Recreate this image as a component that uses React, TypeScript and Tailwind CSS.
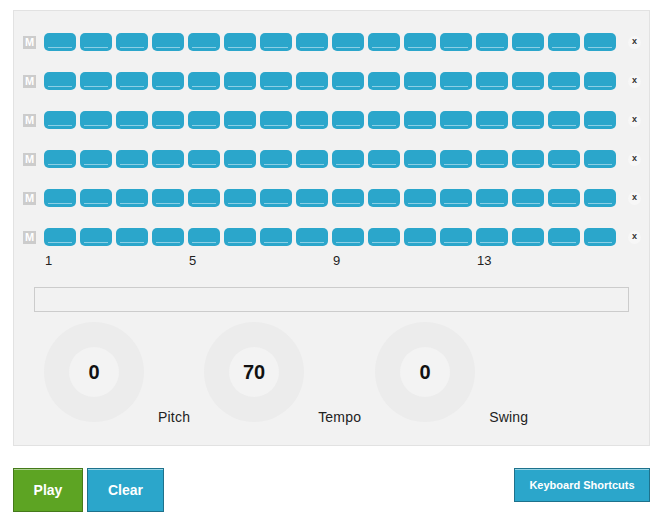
import React from 'react'

const rows = [0, 1, 2, 3, 4, 5]
const steps = Array.from({ length: 16 }, (_, i) => i)

const knobs = [
  { value: '0', label: 'Pitch' },
  { value: '70', label: 'Tempo' },
  { value: '0', label: 'Swing' },
]

function Step() {
  return (
    <button className="relative w-[32px] h-[18px] rounded-[5px] bg-[#2ba6cb] p-0">
      <span className="absolute left-[4px] right-[4px] bottom-[3px] h-px bg-[#8ccfe5]"></span>
    </button>
  )
}

export default function App() {
  return (
    <div
      className="w-[666px] h-[528px] bg-white pt-[10px] pl-[13px]"
      style={{ fontFamily: '"Liberation Sans", Arial, sans-serif' }}
    >
      <div className="w-[637px] h-[436px] border border-[#e2e2e2] bg-[#f2f2f2] pt-[22px] pl-[9px]">
        {/* sequencer rows */}
        <div className="flex flex-col gap-[21px]">
          {rows.map((r) => (
            <div key={r} className="flex items-center h-[18px]">
              <div className="w-[13px] h-[13px] bg-[#cccccc] text-white text-[11px] font-bold leading-[13px] text-center mt-[1px]">
                M
              </div>
              <div className="ml-[8px] flex gap-[4px]">
                {steps.map((s) => (
                  <Step key={s} />
                ))}
              </div>
              <div className="ml-[12px] w-[13px] h-[13px] rounded-full bg-[#f7f7f7] flex items-center justify-center text-[9px] font-bold leading-none text-[#333] pb-[1px]">
                x
              </div>
            </div>
          ))}
        </div>

        {/* step numbers */}
        <div className="ml-[21px] mt-[7px] grid grid-cols-[repeat(16,32px)] gap-x-[4px] text-[13px] leading-[15px] text-[#222]">
          <span className="col-start-1 pl-[1px]">1</span>
          <span className="col-start-5 pl-[1px]">5</span>
          <span className="col-start-9 pl-[1px]">9</span>
          <span className="col-start-13 pl-[1px]">13</span>
        </div>

        {/* text field */}
        <div className="ml-[11px] mt-[19px] w-[595px] h-[25px] border border-[#cccccc] bg-[#f2f2f2]"></div>

        {/* knobs */}
        <div className="ml-[21px] mt-[10px] flex items-end gap-[14px]">
          {knobs.map((k) => (
            <React.Fragment key={k.label}>
              <div className="w-[100px] h-[100px] rounded-full bg-[#ececec] flex items-center justify-center">
                <div className="w-[50px] h-[50px] rounded-full bg-[#f3f3f3] flex items-center justify-center text-[20px] font-bold text-[#111]">
                  {k.value}
                </div>
              </div>
              <span className="text-[14px] leading-[16px] tracking-[0.2px] text-[#222] -mb-[3px]">{k.label}</span>
            </React.Fragment>
          ))}
        </div>
      </div>

      {/* buttons */}
      <div className="mt-[22px] w-[637px] flex items-start">
        <button className="w-[70px] h-[44px] bg-[#5da423] border border-[#457a1a] shadow-[inset_0_1px_0_rgba(255,255,255,0.5)] text-white font-bold text-[14px]">
          Play
        </button>
        <button className="ml-[4px] w-[77px] h-[44px] bg-[#2ba6cb] border border-[#1e728c] shadow-[inset_0_1px_0_rgba(255,255,255,0.5)] text-white font-bold text-[14px]">
          Clear
        </button>
        <button className="ml-auto w-[136px] h-[34px] bg-[#2ba6cb] border border-[#1e728c] shadow-[inset_0_1px_0_rgba(255,255,255,0.5)] text-white font-bold text-[11px]">
          Keyboard Shortcuts
        </button>
      </div>
    </div>
  )
}
